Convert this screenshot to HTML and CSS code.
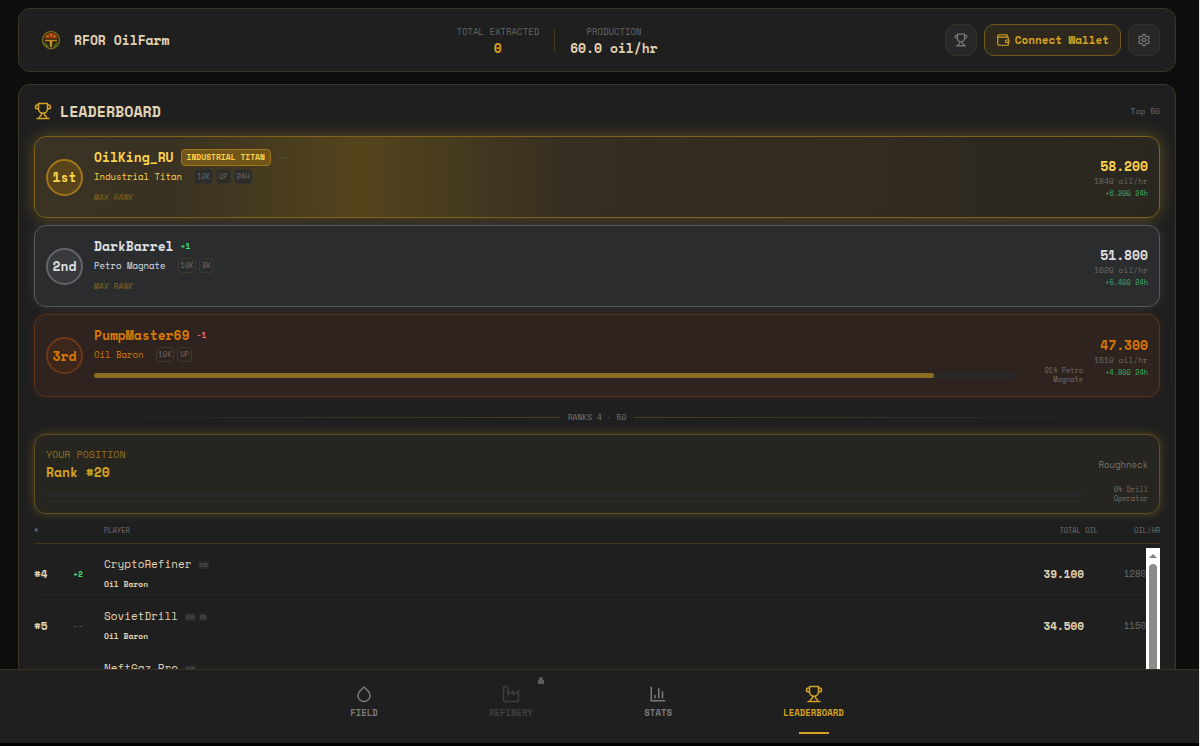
FILE: index.html
```html
<!DOCTYPE html>
<html lang="en">
<head>
    <meta charset="utf-8">
    <title>RFOR OilFarm</title>
    <meta name="viewport" content="width=device-width, initial-scale=1.0">
    <link rel="stylesheet" href="styles.css">
</head>
<body>
    <svg class="sprite" aria-hidden="true">
        <symbol id="trophy" viewBox="0 0 24 24">
            <path d="M6 9H4.5a2.5 2.5 0 0 1 0-5H6M18 9h1.5a2.5 2.5 0 0 0 0-5H18M4 22h16M10 14.66V17c0 .55-.47.98-.97 1.21C7.85 18.75 7 20.24 7 22M14 14.66V17c0 .55.47.98.97 1.21C16.15 18.75 17 20.24 17 22M18 2H6v7a6 6 0 0 0 12 0V2Z"/>
        </symbol>
    </svg>
    <div class="app">
        <header class="panel topbar">
            <div class="brand">
                <svg class="logo" viewBox="0 0 32 32">
                    <circle cx="17" cy="16" r="8.5" fill="#2a1b0a" stroke="#6f6a1a" stroke-width="1.5"/>
                    <path d="M10.500 14.500c0-3.500 3-5.500 6.500-5.500s6.500 2 6.500 5.500z" fill="#96380f"/>
                    <path d="M11 16.500h12M12.500 12.500h2M16 11h2M19.500 12.500h2" stroke="#c08a1e" stroke-width="1.5"/>
                    <path d="M15.500 17l.5 6h2l.5-6z" fill="#b5922c"/>
                    <path d="M11 18.500c1 2 2 3.500 3.500 4M23 18.500c-1 2-2 3.500-3.500 4" fill="none" stroke="#4f7a22" stroke-width="1.5"/>
                </svg>
                <h1>RFOR OilFarm</h1>
            </div>
            <div class="stats">
                <div class="stat">
                    <span class="stat-label">TOTAL EXTRACTED</span>
                    <b class="gold">0</b>
                </div>
                <div class="stat-line"></div>
                <div class="stat">
                    <span class="stat-label">PRODUCTION</span>
                    <b>60.0 oil/hr</b>
                </div>
            </div>
            <div class="actions">
                <button class="btn square" aria-label="Leaderboard"><svg class="icon i14"><use href="#trophy"/></svg></button>
                <button class="btn wallet">
                    <svg class="icon i14" viewBox="0 0 24 24"><path d="M21 12V7H5a2 2 0 0 1 0-4h14v4M3 5v14a2 2 0 0 0 2 2h16v-5M18 12a2 2 0 0 0 0 4h4v-4Z"/></svg>
                    Connect Wallet
                </button>
                <button class="btn square" aria-label="Settings">
                    <svg class="icon i14" viewBox="0 0 24 24"><path d="M12.22 2h-.44a2 2 0 0 0-2 2v.18a2 2 0 0 1-1 1.73l-.43.25a2 2 0 0 1-2 0l-.15-.08a2 2 0 0 0-2.73.73l-.22.38a2 2 0 0 0 .73 2.73l.15.1a2 2 0 0 1 1 1.72v.51a2 2 0 0 1-1 1.74l-.15.09a2 2 0 0 0-.73 2.73l.22.38a2 2 0 0 0 2.73.73l.15-.08a2 2 0 0 1 2 0l.43.25a2 2 0 0 1 1 1.73V20a2 2 0 0 0 2 2h.44a2 2 0 0 0 2-2v-.18a2 2 0 0 1 1-1.73l.43-.25a2 2 0 0 1 2 0l.15.08a2 2 0 0 0 2.73-.73l.22-.39a2 2 0 0 0-.73-2.73l-.15-.08a2 2 0 0 1-1-1.74v-.5a2 2 0 0 1 1-1.74l.15-.09a2 2 0 0 0 .73-2.73l-.22-.38a2 2 0 0 0-2.73-.73l-.15.08a2 2 0 0 1-2 0l-.43-.25a2 2 0 0 1-1-1.73V4a2 2 0 0 0-2-2z"/><circle cx="12" cy="12" r="3"/></svg>
                </button>
            </div>
        </header>

        <main class="panel board">
            <div class="board-head">
                <svg class="icon i18 gold"><use href="#trophy"/></svg>
                <h2>LEADERBOARD</h2>
                <span class="top">Top 50</span>
            </div>

            <section class="podium">
                <article class="card first">
                    <div class="medal">1st</div>
                    <div class="info">
                        <div class="line name">OilKing_RU <span class="tag">INDUSTRIAL TITAN</span> <span class="change">--</span></div>
                        <div class="line title">Industrial Titan <span class="badges"><i>10K</i><i>UP</i><i>24H</i></span></div>
                        <div class="max">MAX RANK</div>
                    </div>
                    <div class="score"><b>58.200</b><span>1840 oil/hr</span><em>+6.200 24h</em></div>
                </article>
                <article class="card second">
                    <div class="medal">2nd</div>
                    <div class="info">
                        <div class="line name">DarkBarrel <span class="change up">+1</span></div>
                        <div class="line title">Petro Magnate <span class="badges"><i>10K</i><i>BK</i></span></div>
                        <div class="max">MAX RANK</div>
                    </div>
                    <div class="score"><b>51.800</b><span>1620 oil/hr</span><em>+5.400 24h</em></div>
                </article>
                <article class="card third">
                    <div class="medal">3rd</div>
                    <div class="info">
                        <div class="line name">PumpMaster69 <span class="change down">-1</span></div>
                        <div class="line title">Oil Baron <span class="badges"><i>10K</i><i>UP</i></span></div>
                        <div class="progress">
                            <div class="bar"><div class="fill" style="width: 91%"></div></div>
                            <span>91% Petro Magnate</span>
                        </div>
                    </div>
                    <div class="score"><b>47.300</b><span>1510 oil/hr</span><em>+4.800 24h</em></div>
                </article>
            </section>

            <div class="divider">RANKS 4 · 50</div>

            <section class="you">
                <div class="you-row">
                    <div>
                        <div class="you-label">YOUR POSITION</div>
                        <div class="you-rank">Rank #20</div>
                    </div>
                    <span class="you-title">Roughneck</span>
                </div>
                <div class="progress">
                    <div class="bar"></div>
                    <span>0% Drill Operator</span>
                </div>
            </section>

            <div class="ranks">
                <table>
                    <thead>
                        <tr><th>#</th><th></th><th>PLAYER</th><th class="num">TOTAL OIL</th><th class="num">OIL/HR</th></tr>
                    </thead>
                    <tbody>
                        <tr>
                            <td class="pos">#4</td>
                            <td class="change up">+2</td>
                            <td class="player">CryptoRefiner <i>10K</i><small>Oil Baron</small></td>
                            <td class="num total">39.100</td>
                            <td class="num rate">1280</td>
                        </tr>
                        <tr>
                            <td class="pos">#5</td>
                            <td class="change">--</td>
                            <td class="player">SovietDrill <i>10K</i><i>EB</i><small>Oil Baron</small></td>
                            <td class="num total">34.500</td>
                            <td class="num rate">1150</td>
                        </tr>
                        <tr>
                            <td class="pos">#6</td>
                            <td class="change">--</td>
                            <td class="player">NeftGaz_Pro <i>10K</i><small>Oil Baron</small></td>
                            <td class="num total">31.200</td>
                            <td class="num rate">1040</td>
                        </tr>
                    </tbody>
                </table>
                <div class="scrollbar"><div class="arrow"></div><div class="thumb"></div></div>
            </div>
        </main>

        <nav class="tabs">
            <div class="tabs-inner">
                <a href="#field"><svg class="icon i18" viewBox="0 0 24 24"><path d="M12 2.69l5.66 5.66a8 8 0 1 1-11.31 0z"/></svg>FIELD</a>
                <a href="#refinery" class="locked">
                    <svg class="icon i18" viewBox="0 0 24 24"><path d="M2 20a2 2 0 0 0 2 2h16a2 2 0 0 0 2-2V8l-7 5V8l-7 5V4a2 2 0 0 0-2-2H4a2 2 0 0 0-2 2Z"/></svg>REFINERY
                    <svg class="lock" viewBox="0 0 8 8"><path d="M2 3a2 2 0 0 1 4 0v1h1v4H1V4h1z"/></svg>
                </a>
                <a href="#stats"><svg class="icon i18" viewBox="0 0 24 24"><path d="M3 3v18h18M18 17V9M13 17V5M8 17v-3"/></svg>STATS</a>
                <a href="#leaderboard" class="active"><svg class="icon i18"><use href="#trophy"/></svg>LEADERBOARD</a>
            </div>
        </nav>
    </div>
</body>
</html>
```
FILE: styles.css
```css
* {
    margin: 0;
    padding: 0;
    box-sizing: border-box;
}

body {
    background: #0d0d0d;
    color: #e0d3b4;
    font-family: "Space Mono", "DejaVu Sans Mono", "Liberation Mono", monospace;
    font-size: 13px;
}

.sprite {
    position: absolute;
    width: 0;
    height: 0;
}

.app {
    position: relative;
    height: 100vh;
    overflow: hidden;
    padding: 8px 23px 0 18px;
    border-right: 1px solid #e8e8e8;
}

.panel {
    background: #1f1f1f;
    border: 1px solid #3b3524;
    border-radius: 12px;
    padding: 15px;
}

.gold {
    color: #d4a321;
}

.icon {
    fill: none;
    stroke: currentColor;
    stroke-width: 2;
    stroke-linecap: round;
    stroke-linejoin: round;
    flex: none;
}

.i14 {
    width: 14px;
    height: 14px;
}

.i18 {
    width: 18px;
    height: 18px;
}

/* top bar */
.topbar {
    display: flex;
    justify-content: space-between;
    align-items: center;
    margin-bottom: 12px;
}

.brand {
    display: flex;
    align-items: center;
    gap: 8px;
}

.logo {
    width: 32px;
    height: 32px;
}

h1 {
    font-size: 13px;
}

.stats {
    display: flex;
    align-items: center;
    gap: 15px;
}

.stat {
    display: flex;
    flex-direction: column;
    align-items: center;
    line-height: 16px;
}

.stat-label {
    font-size: 9px;
    color: #666;
}

.stat-line {
    width: 1px;
    height: 23px;
    background: #41381c;
}

.actions {
    display: flex;
    gap: 7px;
}

.btn {
    display: flex;
    align-items: center;
    justify-content: center;
    gap: 5px;
    height: 32px;
    border: 1px solid #353328;
    border-radius: 10px;
    background: #282828;
    color: #7c7c7c;
    font-family: inherit;
    font-size: 11px;
    font-weight: bold;
}

.square {
    width: 32px;
}

.wallet {
    padding: 0 11px;
    border-color: #715a1c;
    background: #2e291c;
    color: #d4a321;
}

/* leaderboard */
.board-head {
    display: flex;
    align-items: center;
    gap: 8px;
    height: 22px;
    margin-bottom: 14px;
}

h2 {
    font-size: 15px;
}

.top {
    margin-left: auto;
    font-size: 8px;
    color: #707070;
}

.podium {
    display: flex;
    flex-direction: column;
    gap: 7px;
}

.card {
    display: flex;
    align-items: center;
    gap: 11px;
    padding: 11px;
    border: 1px solid;
    border-radius: 12px;
}

.first {
    border-color: #80621a;
    color: #fcd34d;
    background:
        linear-gradient(90deg, transparent 12%, rgba(234, 179, 8, 0.16) 29%, transparent 47%),
        linear-gradient(90deg, #3a3222, #352d20 60%, #2a2720);
    box-shadow: 0 0 16px rgba(212, 163, 33, 0.35);
}

.second {
    border-color: #585a5c;
    color: #dcdee2;
    background: #2b2c2e;
    box-shadow: 0 0 12px rgba(160, 165, 175, 0.16);
}

.third {
    border-color: #5a331b;
    color: #d97706;
    background: #2e231e;
    box-shadow: 0 0 10px rgba(180, 83, 9, 0.15);
}

.medal {
    display: flex;
    align-items: center;
    justify-content: center;
    flex: none;
    width: 37px;
    height: 37px;
    border: 2px solid;
    border-radius: 50%;
    font-weight: bold;
}

.first .medal {
    border-color: #a1761b;
    background: #594319;
}

.second .medal {
    border-color: #626468;
    background: #393a3d;
}

.third .medal {
    border-color: #6b3818;
    background: #3d261a;
}

.info {
    flex: 1;
    min-width: 0;
}

.line {
    display: flex;
    align-items: center;
    height: 18px;
}

.name {
    gap: 7px;
    font-weight: bold;
}

.title {
    gap: 12px;
    margin-top: 1px;
    font-size: 9px;
}

.tag {
    padding: 0 5px;
    border: 1px solid #a1761b;
    border-radius: 4px;
    background: #715519;
    font-size: 8px;
    line-height: 15px;
}

.change {
    font-size: 8px;
    font-weight: bold;
    color: #555;
}

.up {
    color: #3fd97b;
}

.down {
    color: #e8697a;
}

.badges {
    display: flex;
    gap: 3px;
}

.badges i {
    padding: 0 2px;
    border: 1px solid #3d3a2c;
    border-radius: 4px;
    color: #6b6e74;
    font-size: 7px;
    font-style: normal;
    line-height: 13px;
}

.first .badges i {
    border-color: #34322a;
    background: #2c2c2a;
}

.max {
    margin-top: 4px;
    color: #80671c;
    font-size: 8px;
    font-style: italic;
    line-height: 17px;
}

.progress {
    display: flex;
    align-items: center;
    gap: 8px;
    margin-top: 3px;
    font-size: 7px;
    line-height: 9px;
    color: #787068;
}

.info .progress {
    padding-bottom: 1px;
}

.progress span {
    width: 58px;
    text-align: right;
}

.bar {
    flex: 1;
    height: 5px;
    border-radius: 3px;
    background: #292929;
}

.fill {
    height: 5px;
    border-radius: 3px;
    background: #8b6d23;
}

.score {
    display: flex;
    flex-direction: column;
    align-items: flex-end;
    padding-top: 2px;
}

.score b {
    line-height: 18px;
}

.score span {
    font-size: 8px;
    line-height: 13px;
    color: #716d66;
}

.score em {
    font-size: 7px;
    font-style: normal;
    line-height: 11px;
    color: #3cb469;
}

.divider {
    display: flex;
    align-items: center;
    gap: 8px;
    margin: 14px 0 11px;
    font-size: 8px;
    line-height: 12px;
    color: #777;
}

.divider::before,
.divider::after {
    content: "";
    flex: 1;
    height: 1px;
    background: linear-gradient(90deg, transparent, #4d3d20);
}

.divider::after {
    background: linear-gradient(270deg, transparent, #4d3d20);
}

.you {
    padding: 11px 11px 10px;
    border: 1px solid #5e4b1e;
    border-radius: 12px;
    background: #27251f;
    box-shadow: 0 0 10px rgba(212, 163, 33, 0.3);
}

.you-row {
    display: flex;
    align-items: center;
    justify-content: space-between;
}

.you-label {
    color: #91721e;
    font-size: 10px;
    line-height: 17px;
}

.you-rank {
    color: #d4a321;
    font-weight: bold;
    line-height: 19px;
}

.you-title {
    font-size: 9px;
    color: #76736d;
}

/* ranks 4 and below */
.ranks {
    position: relative;
}

table,
thead,
tbody {
    display: block;
}

tr {
    display: grid;
    grid-template-columns: 39px 31px 1fr 90px 62px;
    align-items: center;
}

thead tr {
    padding: 11px 0 6px;
    border-bottom: 1px solid #46361f;
}

th {
    font-size: 7px;
    font-weight: normal;
    line-height: 12px;
    text-align: left;
    color: #757575;
}

tbody {
    margin-top: 4px;
    padding-right: 14px;
}

tbody tr {
    height: 52px;
    border-bottom: 1px solid #232323;
}

.num {
    text-align: right;
}

.pos,
.total {
    font-size: 11px;
    font-weight: bold;
}

.rate {
    font-size: 9px;
    color: #6c6c6c;
}

.player {
    font-size: 11px;
    line-height: 18px;
}

.player i {
    margin-right: 3px;
    padding: 0 1px;
    border-radius: 2px;
    background: #2a2a2a;
    color: #606060;
    font-size: 5px;
    font-style: normal;
    vertical-align: middle;
}

.player small {
    display: block;
    margin-top: 4px;
    font-size: 8px;
    font-weight: bold;
    line-height: 12px;
}

tbody .player {
    padding-bottom: 2px;
}

.scrollbar {
    position: absolute;
    top: 34px;
    right: 0;
    bottom: 0;
    width: 14px;
    background: #fff;
}

.arrow {
    margin: 6px auto;
    width: 8px;
    border: 4px solid transparent;
    border-top: 0;
    border-bottom: 4px solid #7f7f7f;
}

.thumb {
    width: 8px;
    height: 200px;
    margin: 0 auto;
    border-radius: 4px;
    background: #8b8b8b;
}

/* bottom tabs */
.tabs {
    position: absolute;
    left: 0;
    right: 0;
    bottom: 0;
    height: 77px;
    padding-right: 5px;
    background: #1f1f1f;
    border-top: 1px solid #3e2f1c;
    border-bottom: 3px solid #000;
}

.tabs-inner {
    display: flex;
    justify-content: space-around;
    max-width: 605px;
    height: 100%;
    margin: 0 auto;
}

.tabs a {
    position: relative;
    display: flex;
    flex-direction: column;
    align-items: center;
    gap: 4px;
    padding-top: 15px;
    color: #7a7a7a;
    font-size: 9px;
    font-weight: bold;
    line-height: 12px;
    text-decoration: none;
}

.tabs .locked {
    color: #3f3f3f;
}

.lock {
    position: absolute;
    top: 6px;
    right: -12px;
    width: 8px;
    height: 8px;
    fill: #5c5c5c;
}

.tabs .active {
    color: #d4a321;
}

.active::after {
    content: "";
    position: absolute;
    bottom: 9px;
    width: 30px;
    height: 2px;
    background: #d4a321;
}
```
